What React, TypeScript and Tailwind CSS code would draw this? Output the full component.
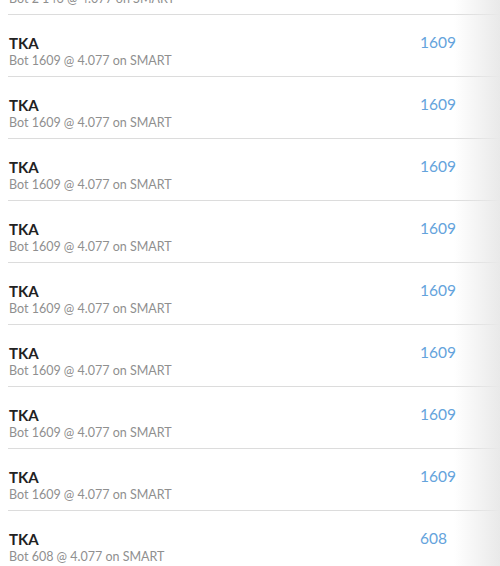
const rows = [
  { sub: 'Bot 2 146 @ 4.077 on SMART', qty: '2146' },
  ...Array.from({ length: 8 }, () => ({ sub: 'Bot 1609 @ 4.077 on SMART', qty: '1609' })),
  { sub: 'Bot 608 @ 4.077 on SMART', qty: '608' },
];

export default function App() {
  return (
    <div className="relative h-[566px] w-[500px] overflow-hidden bg-white font-['Lato',sans-serif]">
      {/* list is scrolled: first row only shows its last line */}
      <div className="-mt-[47px] pl-[8px]">
        {rows.map((r, i) => (
          <div key={i} className="flex h-[62px] border-b border-[#dcdcdc]">
            <div className="flex-1 pl-[1px] pt-[19px]">
              <div className="text-[15px] font-bold leading-[18px] text-[#222]">TKA</div>
              <div className="mt-[1px] text-[12.5px] leading-[16px] text-[#8f8f8f]">{r.sub}</div>
            </div>
            <div className="w-[80px] pt-[18px] text-[15.5px] leading-[18px] text-[#64a3dc]">{r.qty}</div>
          </div>
        ))}
      </div>
      <div className="pointer-events-none absolute right-0 top-0 h-full w-[46px] bg-gradient-to-r from-white/0 to-[#e9e9e9]" />
    </div>
  );
}
